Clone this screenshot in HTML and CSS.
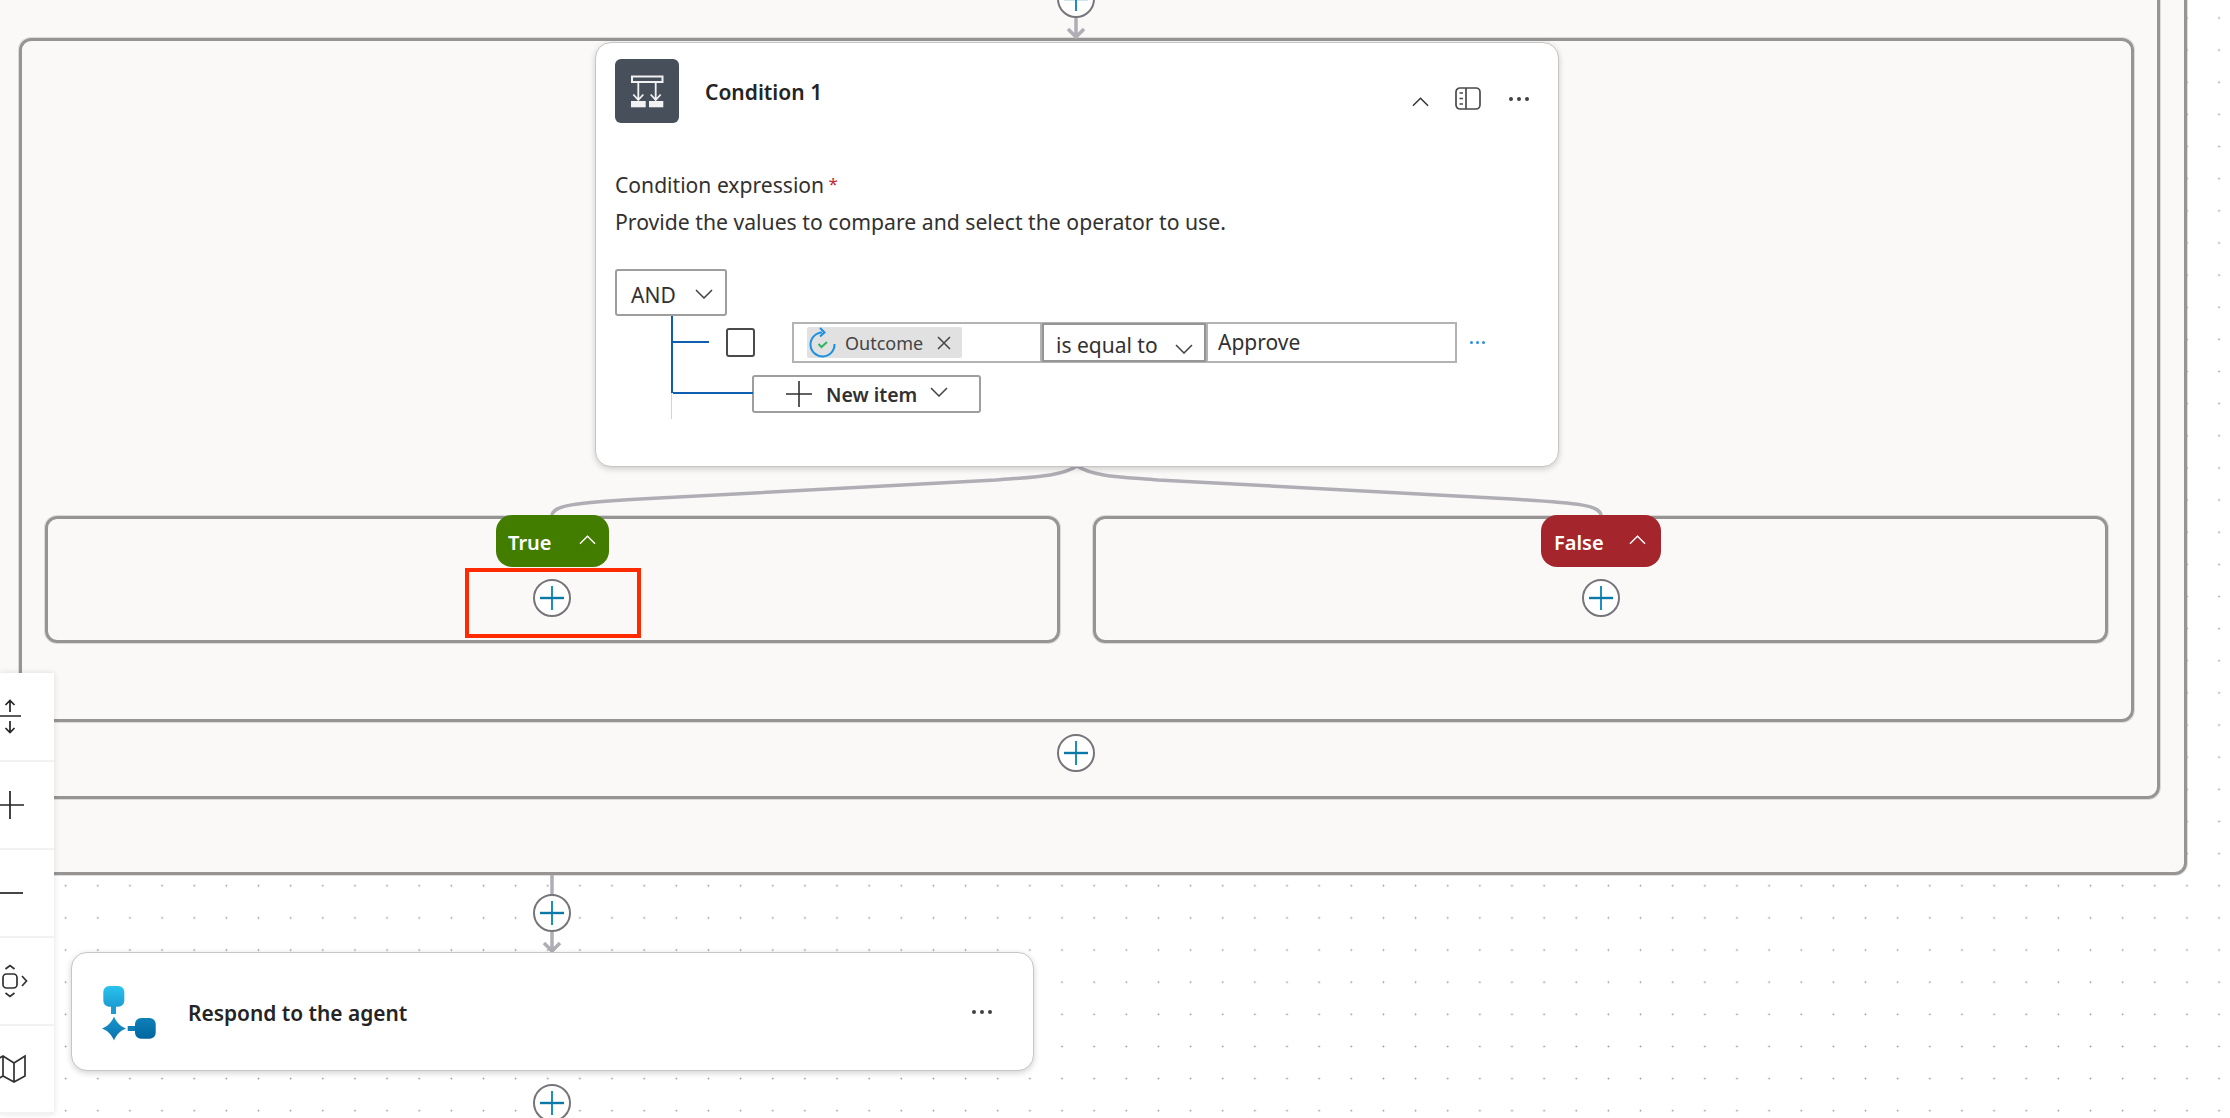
FILE: index.html
```html
<!DOCTYPE html>
<html lang="en">
<head>
<meta charset="utf-8">
<title>Condition flow</title>
<link rel="stylesheet" href="styles.css">
</head>
<body>
<svg class="defs" width="0" height="0" aria-hidden="true">
  <defs>
    <symbol id="plus" viewBox="0 0 24 24"><path d="M12 0V24" stroke="#1a8fc0" stroke-width="2"/><path d="M0 12H24" stroke="#0b79a8" stroke-width="2.400"/></symbol>
    <symbol id="chev-down" viewBox="0 0 18 10"><path d="M1 1L9 9L17 1" fill="none" stroke="currentColor" stroke-width="1.500"/></symbol>
    <symbol id="chev-up" viewBox="0 0 18 10"><path d="M1 9L9 1L17 9" fill="none" stroke="currentColor" stroke-width="1.500"/></symbol>
    <linearGradient id="g1" x1="0" y1="0" x2="0" y2="1"><stop offset="0" stop-color="#29c3ee"/><stop offset="1" stop-color="#1b9dd3"/></linearGradient>
    <linearGradient id="g2" x1="0" y1="0" x2="0" y2="1"><stop offset="0" stop-color="#1796cf"/><stop offset="1" stop-color="#0b72ab"/></linearGradient>
    <linearGradient id="g3" x1="0" y1="0" x2="0" y2="1"><stop offset="0" stop-color="#0f80b8"/><stop offset="1" stop-color="#00669f"/></linearGradient>
  </defs>
</svg>

<main class="canvas">
  <div class="scope scope-outer"></div>
  <div class="scope scope-middle"></div>
  <div class="scope scope-inner"></div>
  <div class="branch branch-true"></div>
  <div class="branch branch-false"></div>

  <svg class="wires" width="2230" height="1118" viewBox="0 0 2230 1118" aria-hidden="true">
    <g fill="none" stroke="#b0aeb5" stroke-width="3.500">
      <path d="M1076 18V37M1068 29L1076 37L1084 29"/>
      <path d="M1077 466C1060 477 1030 477 996 480L640 499C575 503 552 505 552 516"/>
      <path d="M1077 466C1094 477 1124 477 1158 480L1512 499C1578 503 1601 505 1601 516"/>
      <path d="M552 875V895"/>
      <path d="M552 932V951M544 943L552 951L560 943"/>
    </g>
  </svg>

  <button class="add add-top"><svg class="plus"><use href="#plus"/></svg></button>
  <button class="add add-true"><svg class="plus"><use href="#plus"/></svg></button>
  <button class="add add-false"><svg class="plus"><use href="#plus"/></svg></button>
  <button class="add add-mid"><svg class="plus"><use href="#plus"/></svg></button>
  <button class="add add-after"><svg class="plus"><use href="#plus"/></svg></button>
  <button class="add add-last"><svg class="plus"><use href="#plus"/></svg></button>

  <div class="pill pill-true"><span>True</span><svg class="pill-chev"><use href="#chev-up"/></svg></div>
  <div class="pill pill-false"><span>False</span><svg class="pill-chev"><use href="#chev-up"/></svg></div>
  <div class="highlight"></div>

  <section class="card condition">
    <header class="cond-head">
      <div class="cond-icon">
        <svg width="64" height="64" viewBox="0 0 64 64" fill="none" stroke="#f2f2f2">
          <rect x="17" y="17.500" width="30.500" height="5.500" stroke-width="2"/>
          <path d="M23.300 23.500V41M40.700 23.500V41M18.300 35.500L23.300 41L28.300 35.500M35.700 35.500L40.700 41L45.700 35.500" stroke-width="1.800"/>
          <rect x="16" y="42" width="14.700" height="6.300" fill="#f2f2f2" stroke="none"/>
          <rect x="34" y="42" width="14.300" height="6.300" fill="#f2f2f2" stroke="none"/>
        </svg>
      </div>
      <h2 class="cond-title">Condition 1</h2>
      <div class="cond-actions">
        <svg class="act-chev"><use href="#chev-up"/></svg>
        <svg class="act-panel" width="26" height="23" viewBox="0 0 26 23" fill="none" stroke="#4a4a4a" stroke-width="1.700">
          <rect x="1" y="1" width="24" height="21" rx="4"/>
          <path d="M11 1V22M4.500 6H8M4.500 11.500H8M4.500 17H8"/>
        </svg>
        <div class="dots"><i></i><i></i><i></i></div>
      </div>
    </header>
    <p class="label">Condition expression <span class="req">*</span></p>
    <p class="desc">Provide the values to compare and select the operator to use.</p>
    <div class="tree">
      <div class="and-box"><span>AND</span><svg class="chev"><use href="#chev-down"/></svg></div>
      <div class="row">
        <span class="checkbox"></span>
        <div class="fields">
          <div class="field field-left">
            <div class="token">
              <svg class="token-icon" width="28" height="32" viewBox="0 0 28 32" fill="none">
                <path d="M13 5.500A12 12 0 1 0 25.500 17" stroke="#1b8fe0" stroke-width="2"/>
                <path d="M11 1L15.500 5.500L11 9.500" stroke="#1b8fe0" stroke-width="2"/>
                <path d="M9.500 17L12.500 20L18 15" stroke="#2fb562" stroke-width="2"/>
              </svg>
              <span class="token-text">Outcome</span>
              <svg class="token-x" width="14" height="14" viewBox="0 0 14 14"><path d="M1 1L13 13M13 1L1 13" stroke="#444" stroke-width="1.500"/></svg>
            </div>
          </div>
          <div class="field field-op"><span>is equal to</span><svg class="chev op-chev"><use href="#chev-down"/></svg></div>
          <div class="field field-val">Approve</div>
        </div>
        <div class="dots dots-blue"><i></i><i></i><i></i></div>
      </div>
      <div class="new-item">
        <svg width="26" height="26" viewBox="0 0 26 26"><path d="M13 0V26M0 13H26" stroke="#323130" stroke-width="1.600"/></svg>
        <span>New item</span>
        <svg class="chev"><use href="#chev-down"/></svg>
      </div>
    </div>
  </section>

  <section class="card respond">
    <svg class="respond-icon" width="54" height="54" viewBox="0 0 54 54">
      <rect x="13.300" y="0" width="21" height="20.700" rx="6" fill="url(#g1)"/>
      <rect x="21" y="20" width="5" height="8" fill="#1b9dd3"/>
      <path d="M24 30.500C26.500 36.500 30 40 36 42.500C30 45 26.500 48.500 24 54.500C21.500 48.500 18 45 12 42.500C18 40 21.500 36.500 24 30.500Z" fill="url(#g2)"/>
      <rect x="37.700" y="40" width="8" height="5" fill="#0f7fb5"/>
      <rect x="45" y="32" width="20.700" height="20.700" rx="6" fill="url(#g3)"/>
    </svg>
    <h3 class="respond-title">Respond to the agent</h3>
    <div class="dots"><i></i><i></i><i></i></div>
  </section>

  <nav class="toolbar">
    <div class="tool"><svg width="30" height="36" viewBox="0 0 30 36" fill="none" stroke="#242424" stroke-width="1.700"><path d="M0 17H21M10 13V2M5.500 6L10 1.500L14.500 6M10 22V33M5.500 29L10 33.500L14.500 29"/></svg></div>
    <div class="tool"><svg width="30" height="30" viewBox="0 0 30 30" fill="none" stroke="#242424" stroke-width="1.700"><path d="M10 1V29M0 15H24"/></svg></div>
    <div class="tool"><svg width="30" height="30" viewBox="0 0 30 30" fill="none" stroke="#242424" stroke-width="1.700"><path d="M0 15H23"/></svg></div>
    <div class="tool"><svg width="30" height="36" viewBox="0 0 30 36" fill="none" stroke="#323130" stroke-width="1.700"><rect x="3" y="11" width="14" height="14" rx="3.500"/><path d="M5.500 6L10 2.500L14.500 6M5.500 30L10 33.500L14.500 30M22 13L26.500 18L22 23"/></svg></div>
    <div class="tool"><svg width="30" height="30" viewBox="0 0 30 30" fill="none" stroke="#323130" stroke-width="1.700"><path d="M-4 6L3 2L14 9L25 2V22L14 28L3 22L-4 26ZM3 2V22M14 9V28"/></svg></div>
  </nav>
</main>
</body>
</html>
```
FILE: styles.css
```css
* { box-sizing: border-box; }
html, body { margin: 0; padding: 0; }
body { font-family: "Noto Sans", "Open Sans", sans-serif; color: #323130; overflow: hidden; }
.defs { position: absolute; }

.canvas {
  position: relative;
  width: 2230px;
  height: 1118px;
  overflow: hidden;
  background-color: #fff;
  background-image: radial-gradient(circle, #9a9a9a 0.8px, transparent 1.1px);
  background-size: 32.15px 32.15px;
  background-position: -14.7px 1.9px;
}

.scope {
  position: absolute;
  background: #faf9f8;
  border: 3px solid #979593;
  border-radius: 12px;
  box-shadow: 0 0 0 1px rgba(151, 149, 147, .3);
}
.scope-outer { left: -80px; top: -60px; width: 2267px; height: 935px; }
.scope-middle { left: -50px; top: -30px; width: 2210px; height: 829px; background: transparent; }
.scope-inner { left: 19px; top: 38px; width: 2115px; height: 684px; background: transparent; }

.branch {
  position: absolute;
  top: 516px;
  height: 127px;
  border: 3px solid #979593;
  border-radius: 12px;
  box-shadow: 0 0 0 1px rgba(151, 149, 147, .3);
}
.branch-true { left: 45px; width: 1015px; }
.branch-false { left: 1093px; width: 1015px; }

.wires { position: absolute; left: 0; top: 0; }

.add {
  position: absolute;
  width: 38px;
  height: 38px;
  padding: 0;
  display: flex;
  align-items: center;
  justify-content: center;
  background: #fff;
  border: 2px solid #77757a;
  border-radius: 50%;
}
.plus { width: 24px; height: 24px; }
.add-top { left: 1057px; top: -20px; }
.add-true { left: 533px; top: 579px; }
.add-false { left: 1582px; top: 579px; }
.add-mid { left: 1057px; top: 734px; }
.add-after { left: 533px; top: 894px; }
.add-last { left: 533px; top: 1084px; }

.pill {
  position: absolute;
  top: 515px;
  height: 52px;
  display: flex;
  align-items: center;
  justify-content: space-between;
  color: #fff;
  font-size: 20px;
  font-weight: 600;
  border-radius: 16px;
}
.pill span { position: relative; top: 1px; }
.pill-true { left: 496px; width: 113px; background: #437d00; padding: 0 13px 0 12px; }
.pill-false { left: 1541px; width: 120px; background: #a4262c; padding: 0 15px 0 13px; }
.pill-chev { width: 17px; height: 10px; position: relative; top: -1px; }

.highlight {
  position: absolute;
  left: 465px;
  top: 568px;
  width: 176px;
  height: 70px;
  border: 4px solid #ff2a00;
}

.card {
  position: absolute;
  background: #fff;
  border: 1px solid #c8c6c4;
  border-radius: 16px;
  box-shadow: 0 2px 6px rgba(0, 0, 0, .18);
}

.condition { left: 595px; top: 42px; width: 964px; height: 425px; padding: 16px 19px 0; }
.cond-head { display: flex; align-items: center; height: 64px; }
.cond-icon { width: 64px; height: 64px; background: #474f5a; border-radius: 6px; flex: none; }
.cond-title { margin: 0 0 0 26px; font-size: 21px; font-weight: 600; color: #242424; line-height: 26px; position: relative; top: 1px; }
.cond-actions { margin-left: auto; display: flex; align-items: center; margin-top: 15px; margin-right: 10px; }
.act-chev { width: 17px; height: 10px; color: #323130; position: relative; top: 3px; }
.act-panel { margin-left: 26px; }
.dots { display: flex; gap: 4px; }
.dots i { width: 4px; height: 4px; background: #424242; border-radius: 50%; }
.cond-actions .dots { margin-left: 28px; }

.label { margin: 48px 0 0; height: 28px; font-size: 21.100px; line-height: 28px; color: #323130; }
.req { color: #c1272d; font-size: 17px; line-height: 1; position: relative; top: -3px; margin-left: -1px; }
.desc { margin: 9px 0 0; height: 28px; font-size: 21.200px; line-height: 28px; color: #323130; }

.tree { position: relative; margin-top: 33px; }
.tree::before {
  content: "";
  position: absolute;
  left: 56px;
  top: 47px;
  width: 2px;
  height: 77px;
  background: #0f5fb0;
}
.tree::after {
  content: "";
  position: absolute;
  left: 56px;
  top: 124px;
  width: 1px;
  height: 26px;
  background: #c8d6e8;
}
.and-box {
  width: 112px;
  height: 47px;
  display: flex;
  align-items: center;
  justify-content: space-between;
  padding: 4px 12px 0 14px;
  font-size: 21px;
  border: 2px solid #a09e9c;
  border-radius: 3px;
}
.chev { width: 18px; height: 10px; color: #424242; flex: none; }
.and-box .chev { position: relative; top: -1px; }

.row { display: flex; align-items: center; margin-top: 6px; height: 41px; position: relative; }
.row::before {
  content: "";
  position: absolute;
  left: 56px;
  top: 19px;
  width: 38px;
  height: 2px;
  background: #0f5fb0;
}
.checkbox {
  margin-left: 111px;
  width: 29px;
  height: 29px;
  border: 2px solid #4a4a4a;
  border-radius: 3px;
  flex: none;
}
.fields { display: flex; margin-left: 37px; height: 41px; }
.field { height: 41px; background: #fff; border: 2px solid #b3b3b3; }
.field-left { width: 249px; padding: 3px 0 0 13px; border-right-width: 1px; }
.token {
  width: 155px;
  height: 31px;
  display: flex;
  align-items: center;
  background: #e1e1e1;
  border-radius: 2px;
  padding-left: 2px;
}
.token-icon { flex: none; }
.token-text { margin-left: 8px; font-size: 18px; color: #444; }
.token-x { margin-left: 14px; flex: none; }
.field-op {
  width: 166px;
  display: flex;
  align-items: center;
  justify-content: space-between;
  outline: 2px solid #979593;
  outline-offset: -3px;
  padding: 4px 12px 0 13px;
  font-size: 21px;
}
.op-chev { position: relative; top: 4px; }
.field-val { width: 250px; border-left-width: 1px; padding-left: 10px; font-size: 21px; line-height: 36px; }
.dots-blue { margin-left: 13px; gap: 3px; }
.dots-blue i { width: 3px; height: 3px; background: #2a8fe0; }

.new-item {
  margin: 12px 0 0 137px;
  width: 229px;
  height: 38px;
  display: flex;
  align-items: center;
  padding-left: 32px;
  font-size: 19.500px;
  font-weight: 600;
  border: 2px solid #a09e9c;
  border-radius: 3px;
  position: relative;
}
.new-item::before {
  content: "";
  position: absolute;
  left: -81px;
  top: 15px;
  width: 80px;
  height: 2px;
  background: #0f5fb0;
}
.new-item span { margin-left: 14px; }
.new-item .chev { margin-left: 13px; position: relative; top: -2px; }

.respond {
  left: 71px;
  top: 952px;
  width: 963px;
  height: 119px;
  display: flex;
  align-items: center;
  padding: 0 41px 0 19px;
}
.respond-icon { flex: none; overflow: visible; position: relative; left: -1px; top: 1px; }
.respond-title { margin: 0 0 0 43px; font-size: 20.900px; font-weight: 600; color: #242424; position: relative; top: 1px; }
.respond .dots { margin-left: auto; position: relative; top: 0; }

.toolbar {
  position: absolute;
  left: 0;
  top: 673px;
  width: 54px;
  padding-top: 1px;
  background: #fff;
  box-shadow: 0 0 6px rgba(0, 0, 0, .12);
}
.tool {
  height: 88px;
  display: flex;
  align-items: center;
  border-bottom: 2px solid #f3f2f1;
}
.tool svg { overflow: visible; }
```
